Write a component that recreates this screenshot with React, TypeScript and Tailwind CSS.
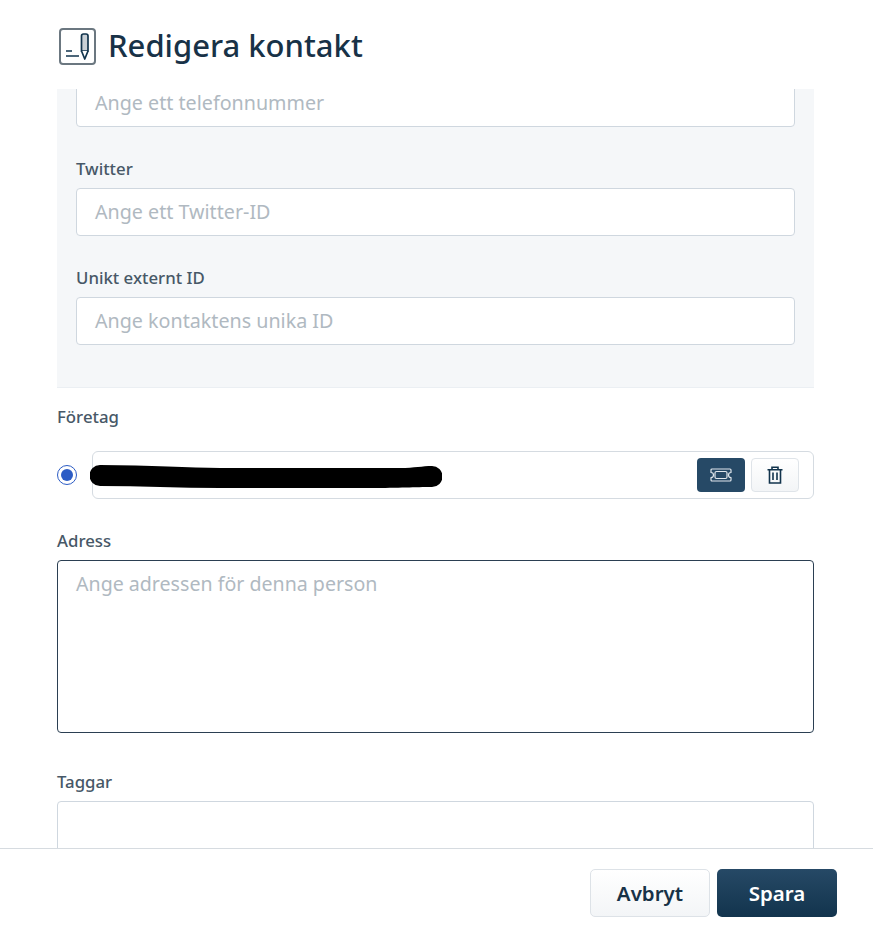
import React from "react";

const font = "font-['Noto_Sans','Open_Sans',sans-serif]";

function Field({ label, placeholder }: { label: string; placeholder: string }) {
  return (
    <div className="mt-[32px] flex flex-col">
      <label className="mb-[9px] h-[20px] text-[16.800px] leading-[20px] font-medium text-[#475867]">{label}</label>
      <div className="flex h-[48px] items-center rounded-[4px] border border-[#cfd7df] bg-white pl-[18px] text-[19.700px] text-[#b0b9c1]">
        {placeholder}
      </div>
    </div>
  );
}

export default function App() {
  return (
    <div className={`flex h-[925px] w-[873px] flex-col overflow-hidden bg-white ${font}`}>
      {/* header */}
      <div className="flex h-[89px] shrink-0 items-center gap-[12px] pl-[59px] pt-[3px]">
        <svg width="37" height="37" viewBox="0 0 37 37" fill="none">
          <rect x="1" y="1" width="35" height="35" rx="3" fill="#fff" stroke="#6b7780" strokeWidth="2" />
          <path d="M7 23h6M7 28h13" stroke="#12344d" strokeWidth="1.600" />
          <path d="M22.500 8a2 2 0 0 1 2-2h2.500a2 2 0 0 1 2 2v15h-6.500z" fill="#c9d0d6" stroke="#12344d" strokeWidth="1.700" />
          <path d="M22.500 23l3.250 8 3.250-8" fill="#fff" stroke="#12344d" strokeWidth="1.700" strokeLinejoin="round" />
        </svg>
        <h1 className="-mt-[2px] text-[31px] leading-[40px] font-medium text-[#183247]">Redigera kontakt</h1>
      </div>

      {/* form */}
      <div className="min-h-0 flex-1 overflow-hidden pl-[57px] pr-[59px]">
        <div className="flex h-[299px] flex-col overflow-hidden border-b border-[#ebeff3] bg-[#f5f7f9] px-[19px]">
          <div className="-mt-[10px] flex h-[48px] shrink-0 items-center rounded-[4px] border border-[#cfd7df] bg-white pl-[18px] text-[19.700px] text-[#b0b9c1]">
            Ange ett telefonnummer
          </div>
          <Field label="Twitter" placeholder="Ange ett Twitter-ID" />
          <Field label="Unikt externt ID" placeholder="Ange kontaktens unika ID" />
        </div>

        <label className="mt-[19px] block h-[20px] text-[16.800px] leading-[20px] font-medium text-[#475867]">Företag</label>
        <div className="mt-[24px] flex items-center gap-[15px]">
          <span className="flex h-[20px] w-[20px] shrink-0 items-center justify-center rounded-full border border-[#2c5cc5]">
            <span className="h-[12px] w-[12px] rounded-full bg-[#2c5cc5]" />
          </span>
          <div className="relative flex h-[48px] flex-1 items-center justify-end gap-[6px] rounded-[6px] border border-[#d5dbe1] pr-[14px]">
            <svg className="absolute left-[-3px] top-[12px]" width="352" height="24" viewBox="0 0 352 24">
              <path d="M10 1 C60 1 100 4 130 4 L310 4 C325 4 332 2 342 2 A10.500 10.500 0 0 1 342 23 C325 23 310 24 280 24 L130 24 C90 24 50 22 10 22 A10.500 10.500 0 0 1 10 1z" fill="#000" />
            </svg>
            <button className="flex h-[34px] w-[48px] items-center justify-center rounded-[4px] bg-[#264966]">
              <svg width="22" height="14" viewBox="0 0 22 14" fill="none" stroke="#dfe6ec" strokeWidth="1.200">
                <path d="M2 1h18a1 1 0 0 1 1 1v2.500a2.500 2.500 0 0 0 0 5V12a1 1 0 0 1-1 1H2a1 1 0 0 1-1-1V9.500a2.500 2.500 0 0 0 0-5V2a1 1 0 0 1 1-1z" strokeLinejoin="round" />
                <rect x="5" y="3.500" width="12" height="7" rx="1.500" />
              </svg>
            </button>
            <button className="flex h-[34px] w-[48px] items-center justify-center rounded-[4px] border border-[#dfe4e9] bg-gradient-to-b from-white to-[#f3f5f7]">
              <svg width="16" height="18" viewBox="0 0 16 18" fill="none" stroke="#12344d" strokeWidth="1.600">
                <path d="M0.500 3.800h15M5 3.800V1.200h6v2.600M2.500 3.800V17h11V3.800M6 6.500V14M10 6.500V14" />
              </svg>
            </button>
          </div>
        </div>

        <label className="mt-[32px] block h-[20px] text-[16.800px] leading-[20px] font-medium text-[#475867]">Adress</label>
        <div className="mt-[9px] h-[173px] rounded-[4px] border border-[#2b3f52] pl-[18px] pt-[9px] text-[19.600px] leading-[28px] text-[#b0b9c1]">
          Ange adressen för denna person
        </div>

        <label className="mt-[39px] block h-[20px] text-[16.800px] leading-[20px] font-medium text-[#475867]">Taggar</label>
        <div className="mt-[9px] h-[60px] rounded-[4px] border border-[#cfd7df]" />
      </div>

      {/* footer */}
      <div className="flex h-[77px] shrink-0 justify-end gap-[7px] border-t border-[#d6dbe0] pt-[20px] pr-[36px]">
        <button className="h-[48px] w-[120px] rounded-[5px] border border-[#dde2e7] bg-gradient-to-b from-white to-[#f3f5f7] text-[20.500px] font-semibold text-[#183247]">
          Avbryt
        </button>
        <button className="h-[48px] w-[120px] rounded-[5px] bg-gradient-to-b from-[#264966] to-[#12344d] text-[20.500px] font-semibold text-white">
          Spara
        </button>
      </div>
    </div>
  );
}
